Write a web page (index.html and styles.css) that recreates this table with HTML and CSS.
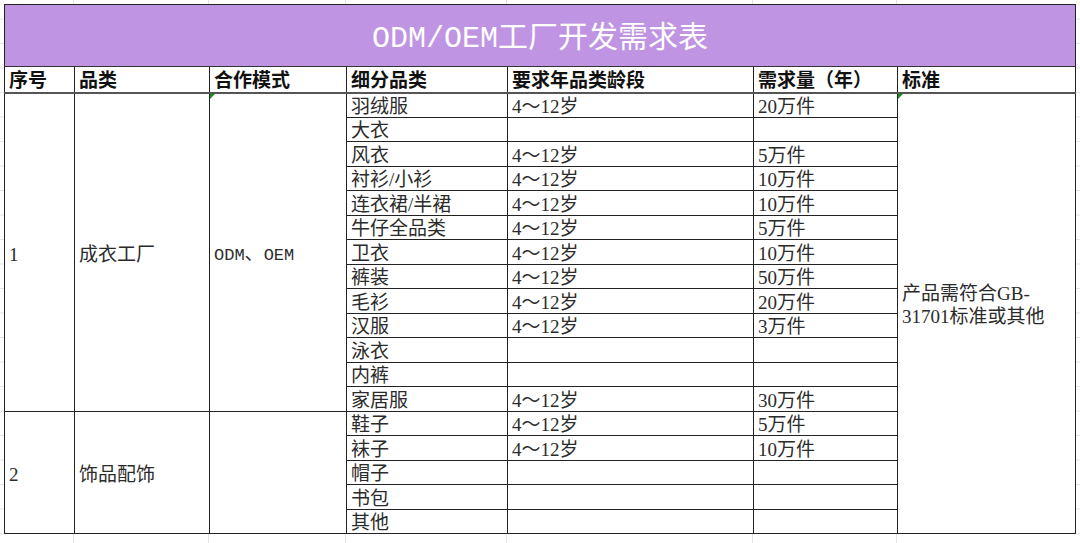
FILE: index.html
```html
<!DOCTYPE html>
<html lang="zh-CN">
<head>
<meta charset="utf-8">
<title>ODM/OEM工厂开发需求表</title>
<link rel="stylesheet" href="styles.css">
</head>
<body>
<div class="sheet">
<table class="grid">
  <colgroup>
    <col class="c1"><col class="c2"><col class="c3"><col class="c4"><col class="c5"><col class="c6"><col class="c7">
  </colgroup>
  <tr class="title-row"><td colspan="7" class="title"><span class="lat">ODM/OEM</span>工厂开发需求表</td></tr>
  <tr class="head-row">
    <th>序号</th><th>品类</th><th>合作模式</th><th>细分品类</th><th>要求年品类龄段</th><th>需求量（年）</th><th>标准</th>
  </tr>
  <tr>
    <td rowspan="13" class="mid">1</td>
    <td rowspan="13" class="mid">成衣工厂</td>
    <td rowspan="13" class="mid mark"><span class="mono">ODM</span>、<span class="mono">OEM</span></td>
    <td>羽绒服</td><td>4～12岁</td><td>20万件</td>
    <td rowspan="18" class="mid std mark">产品需符合GB-<br>31701标准或其他</td>
  </tr>
  <tr><td>大衣</td><td></td><td></td></tr>
  <tr><td>风衣</td><td>4～12岁</td><td>5万件</td></tr>
  <tr><td>衬衫/小衫</td><td>4～12岁</td><td>10万件</td></tr>
  <tr><td>连衣裙/半裙</td><td>4～12岁</td><td>10万件</td></tr>
  <tr><td>牛仔全品类</td><td>4～12岁</td><td>5万件</td></tr>
  <tr><td>卫衣</td><td>4～12岁</td><td>10万件</td></tr>
  <tr><td>裤装</td><td>4～12岁</td><td>50万件</td></tr>
  <tr><td>毛衫</td><td>4～12岁</td><td>20万件</td></tr>
  <tr><td>汉服</td><td>4～12岁</td><td>3万件</td></tr>
  <tr><td>泳衣</td><td></td><td></td></tr>
  <tr><td>内裤</td><td></td><td></td></tr>
  <tr><td>家居服</td><td>4～12岁</td><td>30万件</td></tr>
  <tr>
    <td rowspan="5" class="mid">2</td>
    <td rowspan="5" class="mid">饰品配饰</td>
    <td rowspan="5" class="mid"></td>
    <td>鞋子</td><td>4～12岁</td><td>5万件</td>
  </tr>
  <tr><td>袜子</td><td>4～12岁</td><td>10万件</td></tr>
  <tr><td>帽子</td><td></td><td></td></tr>
  <tr><td>书包</td><td></td><td></td></tr>
  <tr><td>其他</td><td></td><td></td></tr>
</table>
</div>
</body>
</html>
```

FILE: styles.css
```css
html {
  background-color: #fff;
  background-image:
    linear-gradient(to right,
      transparent 73px, #e4e4e4 73px 74px,
      transparent 74px 208px, #e4e4e4 208px 209px,
      transparent 209px 345px, #e4e4e4 345px 346px,
      transparent 346px 506px, #e4e4e4 506px 507px,
      transparent 507px 752px, #e4e4e4 752px 753px,
      transparent 753px 896px, #e4e4e4 896px 897px,
      transparent 897px),
    linear-gradient(#e4e4e4 1px, transparent 1px);
  background-size: 100% 100%, 100% 24.5px;
  background-position: 0 0, 0 92px;
  height: 100%;
}

body {
  margin: 0;
  font-family: "Liberation Serif", "Noto Sans CJK SC", serif;
  color: #2b2b2b;
}

.sheet {
  padding: 4px 0 0 4px;
}

.grid {
  border-collapse: collapse;
  table-layout: fixed;
  width: 1071px;
  background: #fff;
  border: 1px solid #111;
}

.c1 { width: 70px; }
.c2 { width: 135px; }
.c3 { width: 137px; }
.c4 { width: 161px; }
.c5 { width: 246px; }
.c6 { width: 144px; }
.c7 { width: 178px; }

.grid td,
.grid th {
  border: 1px solid #222;
  padding: 0 4px;
  font-size: 19px;
  line-height: 21px;
  vertical-align: bottom;
  text-align: left;
  white-space: nowrap;
  overflow: hidden;
}

.grid tr {
  height: 24.5px;
}

.title-row {
  height: 62px !important;
}

.grid td.title {
  background: #bf94e2;
  color: #fff;
  font-size: 30px;
  line-height: 34px;
  text-align: center;
  vertical-align: middle;
  padding-top: 4px;
  font-family: "Liberation Serif", "Noto Sans CJK SC", serif;
  border-bottom: 1px solid #333;
}

.title .lat {
  font-family: "Liberation Mono", monospace;
}

.mono {
  font-family: "Liberation Mono", monospace;
  font-size: 17px;
}

.head-row {
  height: 26px !important;
}

.grid th {
  font-weight: bold;
  color: #111;
  border-bottom: 2px solid #555;
  line-height: 22px;
}

.grid td.mid {
  vertical-align: middle;
  padding-top: 4px;
}

.grid td.std {
  white-space: normal;
  line-height: 23px;
  padding-top: 0;
  padding-bottom: 16px;
}

.grid td.mark {
  position: relative;
}

.grid td.mark::before {
  content: "";
  position: absolute;
  top: 0;
  left: 0;
  border-top: 5px solid #1e8f1e;
  border-right: 5px solid transparent;
}
```
